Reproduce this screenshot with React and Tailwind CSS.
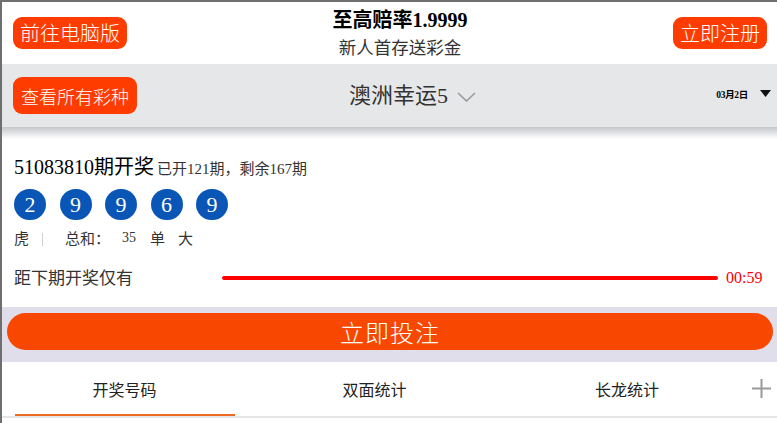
import { useState } from "react";

const balls = ["2", "9", "9", "6", "9"];
const tabs = [
	{ name: "开奖号码", w: "w-[245px]" },
	{ name: "双面统计", w: "w-[255px]" },
	{ name: "长龙统计", w: "w-[250px]" },
];

const App = () => {
	const [activeTab, setActiveTab] = useState(0);

	return (
		<div className="w-[777px] h-[423px] overflow-hidden bg-white border-t-2 border-l-2 border-[#6f6f6f] text-[#333] font-['Liberation_Serif','Noto_Sans_CJK_SC',serif]">
			{/* top header */}
			<div className="h-[62px] flex items-center justify-between pl-[11px] pr-[10px]">
				<button className="h-[32px] px-[7px] rounded-[9px] bg-[#ff3c00] text-white text-[20px] leading-none font-['Noto_Sans_CJK_SC',sans-serif] font-light">
					前往电脑版
				</button>
				<div className="flex flex-col items-center">
					<div className="text-[20px] leading-[24px] font-bold text-black">至高赔率1.9999</div>
					<div className="text-[17.5px] leading-[22px] mt-[4px] font-['Noto_Sans_CJK_SC',sans-serif]">
						新人首存送彩金
					</div>
				</div>
				<button className="h-[32px] px-[7px] rounded-[9px] bg-[#ff3c00] text-white text-[20px] leading-none font-['Noto_Sans_CJK_SC',sans-serif] font-light">
					立即注册
				</button>
			</div>

			{/* lottery bar */}
			<div className="h-[63px] bg-[#e6e7e9] flex items-center pl-[11px] pr-[6px]">
				<button className="h-[37px] px-[8px] rounded-[9px] bg-[#ff3c00] text-white text-[18px] leading-none font-['Noto_Sans_CJK_SC',sans-serif] font-light">
					查看所有彩种
				</button>
				<div className="flex-1 flex items-center justify-center pr-[28px]">
					<span className="text-[22px] leading-none text-[#333]">澳洲幸运5</span>
					<svg className="ml-[9px] mt-[2px]" width="19" height="10" viewBox="0 0 19 10" fill="none">
						<path d="M1 1l8.5 8 8.5-8" stroke="#9a9a9a" strokeWidth="1.6" />
					</svg>
				</div>
				<div className="flex items-center">
					<span className="text-[9.5px] font-bold text-black tracking-[-0.3px]">03月2日</span>
					<svg className="ml-[12px] mb-[4px]" width="11" height="7" viewBox="0 0 11 7">
						<path d="M0 0h11L5.5 7z" fill="#111" />
					</svg>
				</div>
			</div>
			<div className="h-[12px] bg-gradient-to-b from-[#c6c7cb] to-white" />

			{/* current draw */}
			<div className="pl-[12px] pr-[10px]">
				<div className="mt-[14px] flex items-baseline h-[28px]">
					<span className="text-[20px] leading-[28px] text-black">51083810期开奖</span>
					<span className="ml-[3px] text-[15px] text-[#333]">已开121期，剩余167期</span>
				</div>
				<div className="mt-[8px] flex gap-[13.5px]">
					{balls.map((n, i) => (
						<div
							key={i}
							className="w-[32px] h-[31px] rounded-full bg-[#0a56b6] text-white text-[22px] leading-none flex items-center justify-center"
						>
							{n}
						</div>
					))}
				</div>
				<div className="mt-[9px] h-[20px] flex items-center text-[15px]">
					<span>虎</span>
					<span className="ml-[13px] w-px h-[13px] bg-[#cfcfcf]" />
					<span className="ml-[22px]">总和：</span>
					<span className="ml-[12px] text-[14px] -mt-[4px]">35</span>
					<span className="ml-[14px]">单</span>
					<span className="ml-[13px]">大</span>
				</div>
				<div className="mt-[18px] h-[22px] flex items-center">
					<span className="text-[17px] leading-none">距下期开奖仅有</span>
					<div className="ml-[89px] w-[496px] h-[4px] rounded-full bg-[#ff0000]" />
					<span className="ml-[8px] text-[16px] text-[#ff0000]">00:59</span>
				</div>
			</div>

			{/* bet button */}
			<div className="mt-[18px] h-[55px] bg-[#dfdeea] pt-[6px] pl-[5px] pr-[4px]">
				<button className="w-full h-[37px] rounded-full bg-[#f84700] text-white text-[24px] leading-none font-['Noto_Sans_CJK_SC',sans-serif] font-light tracking-[1px]">
					立即投注
				</button>
			</div>

			{/* tabs */}
			<div className="h-[56px] flex border-b-[2px] border-[#e5e5e5]">
				{tabs.map((t, i) => (
					<button
						key={t.name}
						onClick={() => setActiveTab(i)}
						className={`${t.w} h-full flex flex-col items-center justify-end`}
					>
						<span className="text-[16px] leading-none font-['Noto_Sans_CJK_SC',sans-serif] mb-[17px] text-[#222]">{t.name}</span>
						<span className={`w-[220px] h-[2px] ${activeTab === i ? "bg-[#ee6a22]" : "bg-transparent"}`} />
					</button>
				))}
				<div className="flex-1 flex items-center justify-center pb-[2px] pr-[6px]">
					<svg width="19" height="19" viewBox="0 0 19 19">
						<path d="M9.5 0v19M0 9.5h19" stroke="#9a9a9a" strokeWidth="2" />
					</svg>
				</div>
			</div>
		</div>
	);
};

export default App;
